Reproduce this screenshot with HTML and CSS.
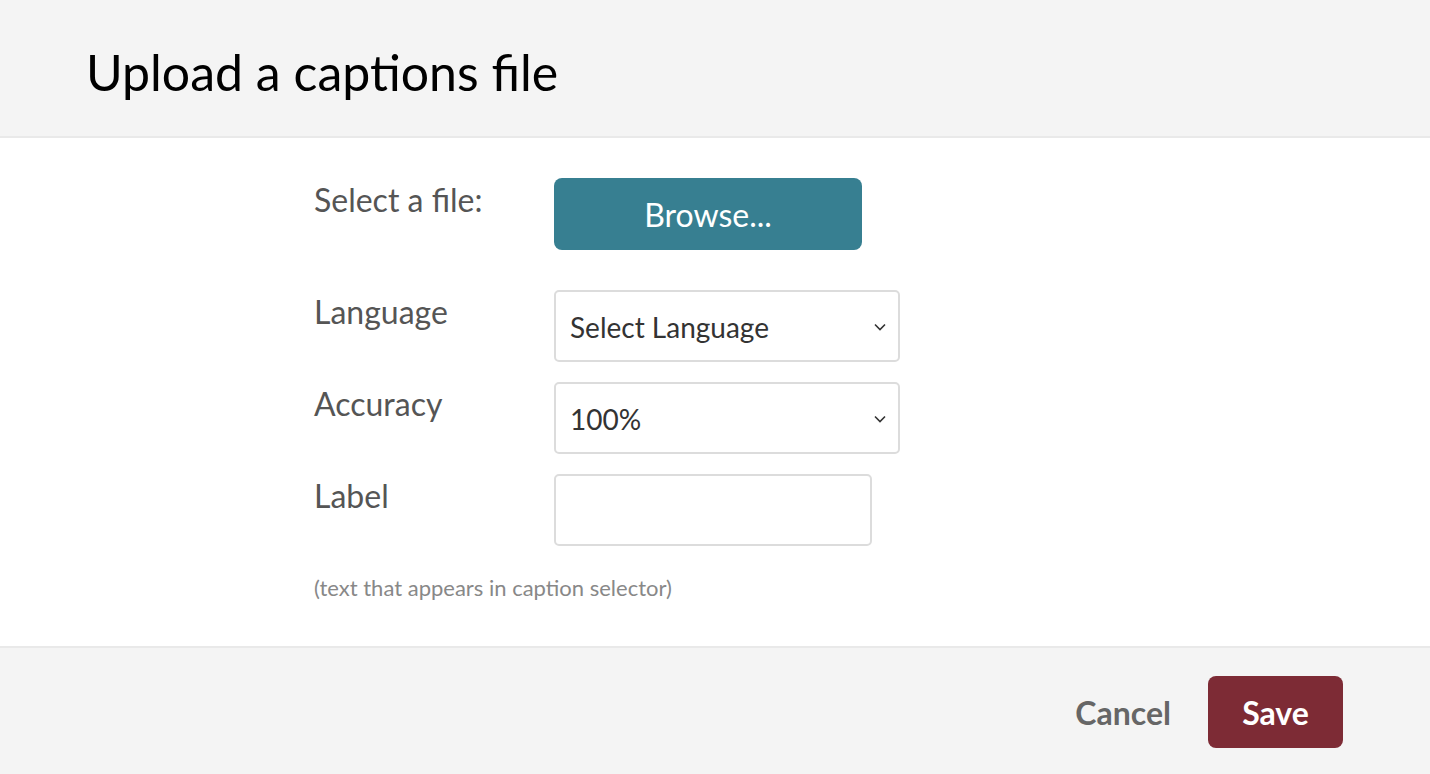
FILE: index.html
```html
<!DOCTYPE html>
<html lang="en">
<head>
  <meta charset="UTF-8" />
  <meta name="viewport" content="width=device-width, initial-scale=1.0"/>
  <title>Upload a captions file</title>
  <link rel="stylesheet" href="styles.css">
</head>
<body>
  <div class="modal">
    <div class="modal-header">
      <h1>Upload a captions file</h1>
    </div>

    <div class="modal-body">
      <div class="form-grid">
        <label class="field-label">Select a file:</label>
        <div class="field">
          <button class="browse-btn" type="button">Browse...</button>
        </div>

        <label class="field-label" for="language">Language</label>
        <div class="field">
          <div class="select-box" id="language">
            <span>Select Language</span>
            <svg class="chevron" viewBox="0 0 12 8" width="12" height="8"><path d="M1 1.5l5 5 5-5" fill="none" stroke="#333" stroke-width="1.6"/></svg>
          </div>
        </div>

        <label class="field-label" for="accuracy">Accuracy</label>
        <div class="field">
          <div class="select-box" id="accuracy">
            <span>100%</span>
            <svg class="chevron" viewBox="0 0 12 8" width="12" height="8"><path d="M1 1.5l5 5 5-5" fill="none" stroke="#333" stroke-width="1.6"/></svg>
          </div>
        </div>

        <label class="field-label" for="label">Label</label>
        <div class="field">
          <input class="text-input" id="label" type="text" />
        </div>
      </div>
      <p class="hint">(text that appears in caption selector)</p>
    </div>

    <div class="modal-footer">
      <button class="cancel-btn" type="button">Cancel</button>
      <button class="save-btn" type="button">Save</button>
    </div>
  </div>
</body>
</html>
```

FILE: styles.css
```css
body {
  margin: 0;
  font-family: Lato, 'Noto Sans', sans-serif;
  background-color: #fff;
}

.modal {
  width: 1430px;
  height: 774px;
  display: flex;
  flex-direction: column;
  overflow: hidden;
}

.modal-header {
  height: 138px;
  background-color: #f4f4f4;
  border-bottom: 2px solid #e9e9e9;
  display: flex;
  align-items: center;
  padding: 8px 0 0 86px;
  box-sizing: border-box;
}

.modal-header h1 {
  margin: 0;
  font-size: 50px;
  font-weight: 400;
  color: #000;
}

.modal-body {
  flex: 1;
  padding: 40px 0 0 314px;
}

.form-grid {
  display: grid;
  grid-template-columns: 240px auto;
  row-gap: 20px;
}

.form-grid .field-label:first-child + .field {
  margin-bottom: 20px;
}

.field-label {
  font-size: 32px;
  line-height: 1.2;
  color: #555;
  padding-top: 3px;
}

.field {
  display: flex;
}

.browse-btn {
  width: 308px;
  height: 72px;
  border: none;
  border-radius: 8px;
  background-color: #377f91;
  color: #fff;
  font-family: inherit;
  font-size: 32px;
}

.select-box {
  width: 346px;
  height: 72px;
  box-sizing: border-box;
  border: 2px solid #dcdcdc;
  border-radius: 5px;
  padding: 2px 14px 0;
  display: flex;
  align-items: center;
  justify-content: space-between;
  font-size: 28px;
  color: #333;
}

.chevron {
  margin-right: -2px;
}

.text-input {
  width: 318px;
  height: 72px;
  box-sizing: border-box;
  border: 2px solid #dcdcdc;
  border-radius: 5px;
  font-family: inherit;
  font-size: 28px;
  padding: 0 14px;
}

.hint {
  margin: 28px 0 0;
  font-size: 22px;
  color: #888;
}

.modal-footer {
  height: 128px;
  box-sizing: border-box;
  background-color: #f4f4f4;
  border-top: 2px solid #e9e9e9;
  display: flex;
  align-items: center;
  justify-content: flex-end;
  padding: 2px 87px 0 0;
  gap: 37px;
}

.cancel-btn {
  border: none;
  background: none;
  padding: 0;
  font-family: inherit;
  font-size: 32px;
  font-weight: 700;
  color: #666;
}

.save-btn {
  width: 135px;
  height: 72px;
  border: none;
  border-radius: 8px;
  background-color: #7d2b35;
  color: #fff;
  font-family: inherit;
  font-size: 32px;
  font-weight: 700;
}
```
